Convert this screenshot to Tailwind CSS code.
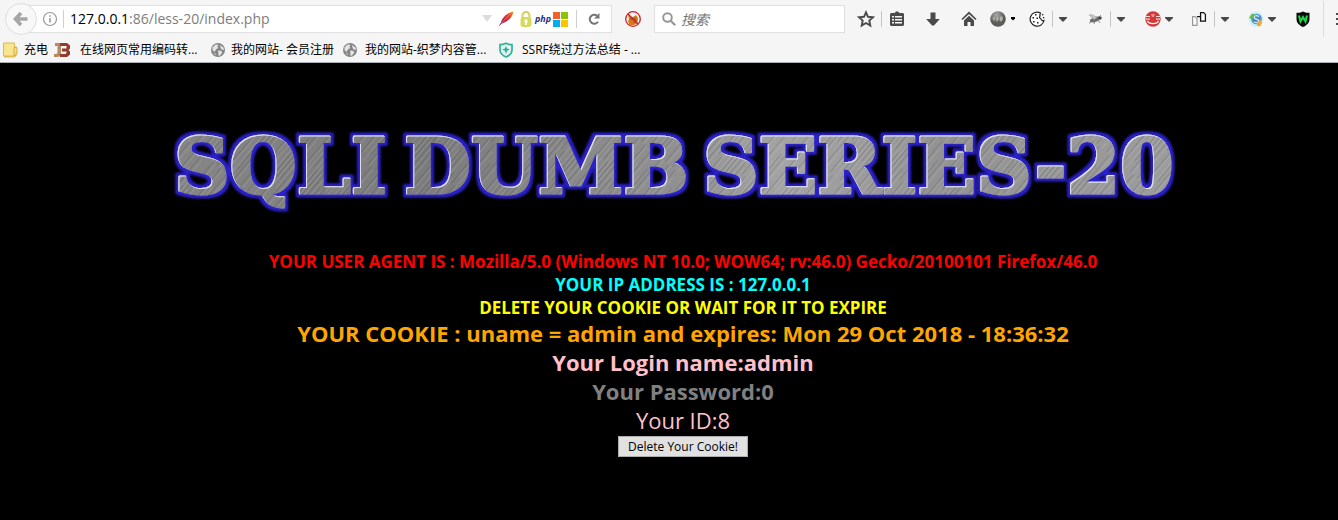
<!DOCTYPE html>
<html lang="zh-CN">
<head>
<meta charset="utf-8">
<title>127.0.0.1:86/less-20/index.php</title>
<script src="https://cdn.jsdelivr.net/npm/@tailwindcss/browser@4"></script>
</head>
<body class="flex min-h-screen flex-col bg-black font-['Open_Sans','Noto_Sans_CJK_SC',sans-serif]">

<svg class="hidden" aria-hidden="true">
  <symbol id="caret" viewBox="0 0 8 5"><path d="M0 0h8v1L4 5 0 1z" fill="#484848"/></symbol>
  <symbol id="globe" viewBox="0 0 14 14">
    <circle cx="7" cy="7" r="7" fill="#858585"/>
    <path d="M1.500 4.500 4.500 1.500 7.500 1.800 6.500 3.500 7.200 5 5 6.500 3.500 9 1.500 7zM9 2l3.500 2.500.5 2.500-2.500-.500-1-2zM7 7.500l3 .3 1.300 1.700-2.500 3.300-1.600-.500.300-2zM2.500 10l2 .5.500 1.800z" fill="#e4e4e4"/>
  </symbol>
</svg>

<header class="shrink-0 overflow-hidden border-b border-[#a9b0b5] bg-[#f5f5f5]">
  <nav class="flex h-[38px] items-center" aria-label="Navigation toolbar">
    <button class="z-10 ml-[5px] grid size-8 shrink-0 place-items-center rounded-full border border-[#dedede] bg-[#f8f8f8]" aria-label="Back">
      <svg class="size-4" viewBox="0 0 16 16"><path d="M8 2 2.500 8 8 14M3 8h11.500" fill="none" stroke="#a6a6a6" stroke-width="3.600"/></svg>
    </button>
    <div class="-ml-4 flex h-7 min-w-0 flex-1 items-center border border-[#e0e0e0] bg-white pl-5">
      <button class="shrink-0" aria-label="Site information">
        <svg class="size-4" viewBox="0 0 16 16"><circle cx="8" cy="8" r="6.500" fill="none" stroke="#999" stroke-width="1.200"/><path d="M8 7v4.500M8 4.200v1.600" stroke="#999" stroke-width="1.600"/></svg>
      </button>
      <span class="ml-[5px] h-[18px] w-px shrink-0 bg-[#d0d0d0]"></span>
      <a href="#" class="ml-1.5 min-w-0 flex-1 truncate text-[14px] leading-6 text-[#7d7d7d]"><span class="text-black">127.0.0.1</span>:86/less-20/index.php</a>
      <button class="shrink-0" aria-label="History"><svg class="h-2 w-2.5" viewBox="0 0 10 8"><path d="M0 0h10L5 7z" fill="#dcdcdc"/></svg></button>
      <svg class="ml-1.5 size-4 shrink-0" viewBox="0 0 16 16" role="img" aria-label="Apache">
        <defs><linearGradient id="feather" x1="0" y1="1" x2="1" y2="0"><stop offset="0" stop-color="#5b2b88"/><stop offset=".4" stop-color="#c7223e"/><stop offset=".7" stop-color="#e0422f"/><stop offset="1" stop-color="#f5a01e"/></linearGradient></defs>
        <path d="M.500 15.500 3 11.500C4 7 9 1.500 15.500.500 15 5 11 9.500 7.500 11L4 12.500z" fill="url(#feather)"/><path d="M3 12.500 12 3" stroke="#ef9a9a" stroke-width=".6"/>
      </svg>
      <svg class="ml-1 size-4 shrink-0" viewBox="0 0 16 16" role="img" aria-label="Lock">
        <path d="M4.500 7V4.500a3.500 3.500 0 0 1 7 0V7" fill="none" stroke="#cfd258" stroke-width="2"/><rect x="2.500" y="6" width="11" height="10" rx="3" fill="#d6da5c"/><path d="M8 8v6M6 10.500h4" stroke="#fff" stroke-width="1.700"/>
      </svg>
      <span class="w-[18px] shrink-0 text-center text-[9px] leading-4 font-bold text-[#1f3285] italic">php</span>
      <svg class="ml-px size-[15px] shrink-0" viewBox="0 0 15 15" role="img" aria-label="Windows"><path d="M0 0h7v7H0z" fill="#f4622c"/><path d="M8 0h7v7H8z" fill="#8bc400"/><path d="M0 8h7v7H0z" fill="#00aef0"/><path d="M8 8h7v7H8z" fill="#fdc500"/></svg>
      <span class="ml-2 h-[18px] w-px shrink-0 bg-[#cfcfcf]"></span>
      <button class="mx-[11px] shrink-0" aria-label="Reload">
        <svg class="size-3" viewBox="0 0 12 12"><path d="M9 2.600A4.500 4.500 0 1 0 10 8.800" fill="none" stroke="#747474" stroke-width="2"/><path d="M11.500 0v5.500H6z" fill="#747474"/></svg>
      </button>
    </div>
    <button class="ml-[13px] shrink-0" aria-label="Proxy disabled">
      <svg class="size-4" viewBox="0 0 16 16"><path d="m3 4 1.700 1.500L8 6l3-2 2 3-.500 5L9 14H5L3 11l1-3z" fill="#d9791d"/><path d="m5 8 2 1 3-2 1 3-3 2" fill="none" stroke="#8c5323"/><circle cx="8" cy="8" r="7.300" fill="none" stroke="#ce2021" stroke-width="1.300"/><path d="m3 3 10 10" stroke="#ce2021" stroke-width="1.500"/></svg>
    </button>
    <label class="ml-[13px] flex h-7 w-[191px] shrink-0 items-center border border-[#e0e0e0] bg-white pl-[7px]">
      <svg class="size-3.5 shrink-0" viewBox="0 0 14 14"><circle cx="5.500" cy="5.500" r="4.300" fill="none" stroke="#989898" stroke-width="2"/><path d="m8.500 8.500 4.700 4.700" stroke="#989898" stroke-width="2.200"/></svg>
      <input type="search" aria-label="搜索" placeholder="搜索" class="ml-[5px] w-full min-w-0 bg-transparent text-[14px] text-black italic outline-none placeholder:text-[#757575]">
    </label>

    <div class="flex shrink-0 items-center pl-3">
      <button aria-label="Bookmark this page"><svg class="size-[18px]" viewBox="0 0 18 18"><path d="m9 2.300 2 4.500 4.900.500-3.600 3.300 1 4.900L9 13l-4.300 2.500 1-4.900-3.600-3.300L7 6.800z" fill="none" stroke="#4a4a4a" stroke-width="1.900"/></svg></button>
      <span class="ml-1.5 h-4 w-px bg-[#c6c6c6]"></span>
      <button class="ml-[7px]" aria-label="Bookmarks"><svg class="size-4" viewBox="0 0 16 16"><path d="M5.500 2 7 .5h2L10.500 2H14l1 1v11l-1 1H2l-1-1V3l1-1z" fill="#4a4a4a"/><path d="M3 5.800h2M6 5.800h7M3 8.800h2M6 8.800h7M3 11.800h2M6 11.800h7" stroke="#f5f5f5" stroke-width="1.600"/></svg></button>
      <button class="ml-5" aria-label="Downloads"><svg class="size-4" viewBox="0 0 16 16"><path d="M5.500 1.500h5V8h4.300L9 14.500H7L1.200 8h4.300z" fill="#4a4a4a"/></svg></button>
      <button class="ml-5" aria-label="Home"><svg class="size-4" viewBox="0 0 16 16"><path d="m1 8.500 7-6.700 7 6.700" fill="none" stroke="#4a4a4a" stroke-width="1.700"/><path d="M3 9.500 8 4.800l5 4.700V15H9.500v-4h-3v4H3z" fill="#4a4a4a"/></svg></button>
      <button class="ml-[13px]" aria-label="User agent"><svg class="size-4" viewBox="0 0 16 16"><defs><radialGradient id="ball" cx=".4" cy=".25"><stop stop-color="#aaa"/><stop offset="1" stop-color="#5b5b58"/></radialGradient></defs><circle cx="8" cy="8" r="7.800" fill="url(#ball)"/><path d="m2.500 7 2-1 .5 2-1 2zM6 8l2-3 .5 3L7 11zM10 6l2-1 1 3-2 3-1.500-2z" fill="#b2b2a9"/></svg></button>
      <button class="ml-1" aria-label="User agent menu"><svg class="h-1 w-1.5" viewBox="0 0 6 4"><path d="M1 0h4v1.500L3 3.500 1 1.500z"/></svg></button>
      <button class="ml-[13px]" aria-label="Cookies"><svg class="size-4" viewBox="0 0 16 16"><path d="M11.500 2A7 7 0 1 0 15 9.500c-1.500.500-2.800-.200-3-1.500-1.500-.500-1.800-2-1-3 -.300-1.200 0-2 .500-3z" fill="#fff" stroke="#222" stroke-width="1.200"/><path d="M6 3h1.500v1.500H6zM3.500 6H5v1.500H3.500zM7.500 6.500H9V8H7.500zM4 10h1.500v1.500H4zM8 11h1.500v1.500H8z" fill="#222"/><path d="M13 3h1.300v1.300H13zM14 6h1.300v1.300H14z" fill="#222"/></svg></button>
      <span class="ml-[7px] h-4 w-px bg-[#c6c6c6]"></span>
      <button class="ml-1.5" aria-label="Cookies menu"><svg class="h-[5px] w-2"><use href="#caret"/></svg></button>
      <button class="ml-5" aria-label="Firebug"><svg class="size-4" viewBox="0 0 16 16"><ellipse cx="8" cy="8.500" rx="5.500" ry="2.500" transform="rotate(-22 8 8.500)" fill="#6d6d6d"/><circle cx="13" cy="7" r="1.700" fill="#444"/><path d="M10 6.500 5 3.500l-3 .5 5 4.500z" fill="#c4c4c4" stroke="#999" stroke-width=".5"/><path d="m5 10-3 2.500M8 10l-1 3M11 9l2 3M12 6l2-2" stroke="#777" stroke-width=".8"/></svg></button>
      <span class="ml-[7px] h-4 w-px bg-[#c6c6c6]"></span>
      <button class="ml-1.5" aria-label="Firebug menu"><svg class="h-[5px] w-2"><use href="#caret"/></svg></button>
      <button class="ml-5" aria-label="Red tool"><svg class="size-4" viewBox="0 0 16 16"><circle cx="8" cy="8" r="7.700" fill="#d43838"/><path d="M1 5.500h4M11 5.500h4M1 8.200h4M11 8.200h4" stroke="#f3d6d6" stroke-width="1.200"/><path d="M2.500 10c1.500 3.500 9.500 3.500 11 0" fill="none" stroke="#fff" stroke-width="1.400"/><path d="M6 3h4l-1 3H7z" fill="#ee8d8d"/></svg></button>
      <button class="ml-1" aria-label="Red tool menu"><svg class="h-[5px] w-2"><use href="#caret"/></svg></button>
      <button class="ml-[18px]" aria-label="Switch pages"><svg class="size-4" viewBox="0 0 16 16"><path d="M1.600 5.600h2.400l2 2v6.800H1.600z" fill="#fafafa" stroke="#999" stroke-width="1.200"/><path d="M9.600 1.600h3l1.800 1.800v6.800H9.600zM6 5.600h3.500" fill="#fff" stroke="#111" stroke-width="1.300"/></svg></button>
      <span class="ml-[7px] h-4 w-px bg-[#c6c6c6]"></span>
      <button class="ml-1.5" aria-label="Pages menu"><svg class="h-[5px] w-2"><use href="#caret"/></svg></button>
      <button class="ml-[19px]" aria-label="Session"><svg class="size-4" viewBox="0 0 16 16"><circle cx="8" cy="8" r="7.500" fill="#c7f1fa"/><circle cx="8.500" cy="8" r="5.300" fill="#4d8fc5"/><path d="M11 5.500C8 3.500 5.500 5 6.500 7s4 .800 4 3-3 2-4.500 1" fill="none" stroke="#d9edf5" stroke-width="1.200"/><path d="m1 7 3-4.500L7 4 4 8z" fill="#6abb35"/><path d="m9 12 4-4 1 4-2 3.500-3-.500z" fill="#efa83e"/></svg></button>
      <button class="ml-1" aria-label="Session menu"><svg class="h-[5px] w-2"><use href="#caret"/></svg></button>
      <button class="ml-[19px]" aria-label="Wappalyzer"><svg class="size-4" viewBox="0 0 16 16"><path d="M8 .500c2 1.200 4.500 1.500 6.500 1.200V8c0 4-3 6.500-6.500 8-3.500-1.500-6.500-4-6.500-8V1.700C3.500 2 6 1.700 8 .500z" fill="#0a0a0a"/><path d="m4 4.500 1.500 6L8 6.200l2.500 4.300 1.500-6" fill="none" stroke="#20d546" stroke-width="2.100"/></svg></button>
      <span class="ml-3 h-9 w-px bg-[#dcdcdc]"></span>
      <button class="ml-3 flex w-0.5 flex-col gap-[3px]" aria-label="Open menu"><span class="h-0.5 w-full bg-[#4a4a4a]"></span><span class="h-0.5 w-full bg-[#4a4a4a]"></span><span class="h-0.5 w-full bg-[#4a4a4a]"></span></button>
    </div>
  </nav>

  <nav class="flex h-6 items-center pl-[3px] text-[12px] leading-6 whitespace-nowrap text-black" aria-label="Bookmarks">
    <a href="#" class="flex w-[51px] shrink-0 items-center gap-[5px]">
      <svg class="size-4 shrink-0" viewBox="0 0 16 16"><path d="M1 1.500h9l2 3h1.500v9.500l-2 1.500H1z" fill="#e3c053"/><path d="M.500 1h11v13H.500z" fill="#f8e68f" stroke="#d8b957"/><path d="M11 5.500h3V12l-3 1.500z" fill="#f5de7a" stroke="#d1ae47"/></svg>充电
    </a>
    <a href="#" class="flex w-[157px] shrink-0 items-center gap-[10px]">
      <svg class="size-4 shrink-0" viewBox="0 0 16 16"><path d="M1 1h6v10q0 4-4 4H0v-3h2q1.500 0 1.500-2V4H1z" fill="#b68a60"/><path d="M6 1h7l3 2.500v3L14.500 8l1.500 1.500v3L13 15H6v-3h5.500l1-1V9.500H8v-3h4.500V4H6z" fill="#943a2e"/></svg>在线网页常用编码转...
    </a>
    <a href="#" class="flex w-[132px] shrink-0 items-center gap-1.5"><svg class="size-3.5 shrink-0"><use href="#globe"/></svg>我的网站- 会员注册</a>
    <a href="#" class="flex w-[155px] shrink-0 items-center gap-2"><svg class="size-3.5 shrink-0"><use href="#globe"/></svg>我的网站-织梦内容管...</a>
    <a href="#" class="flex shrink-0 items-center gap-2"><svg class="size-4 shrink-0" viewBox="0 0 16 16"><path d="M8 1.200c2 1 4 1.500 6 1.500V8c0 3.500-2.500 5.500-6 7-3.500-1.500-6-3.500-6-7V2.700c2 0 4-.500 6-1.500z" fill="#e5f5f1" stroke="#35b197" stroke-width="1.700"/><path d="m8 4 1.200 2.500L12 7.500 9.200 8.700 8 12 6.800 8.700 4 7.500l2.800-1z" fill="#35b197"/></svg>SSRF绕过方法总结 - ...</a>
  </nav>
</header>

<main class="flex flex-1 flex-col items-center pt-[57px] pl-7 text-center">
  <h1 class="w-full max-w-[1040px]">
    <svg class="block w-full" viewBox="0 0 1040 100">
      <defs>
        <linearGradient id="steel" x1="0" x2="1"><stop offset="0" stop-color="#868686"/><stop offset=".25" stop-color="#7c7c7c"/><stop offset=".5" stop-color="#919191"/><stop offset=".6" stop-color="#a4a4a4"/><stop offset=".75" stop-color="#929292"/><stop offset="1" stop-color="#9e9e9e"/></linearGradient>
        <pattern id="scratches" width="97" height="31" patternUnits="userSpaceOnUse" patternTransform="rotate(-50)">
          <path d="M0 1.500h60M20 6.500h77M0 11.500h45M50 15.500h47M8 19.500h70M0 24.500h90M30 28.500h40" stroke="#fff" stroke-opacity=".12"/>
          <path d="M30 3.500h67M0 8.500h50M40 13.500h57M0 17.500h40M60 21.500h37M10 26.500h50M0 30.500h80" stroke="#000" stroke-opacity=".12"/>
        </pattern>
        <pattern id="brushed" width="1040" height="100" patternUnits="userSpaceOnUse"><rect width="1040" height="100" fill="url(#steel)"/><rect width="1040" height="100" fill="url(#scratches)"/></pattern>
        <filter id="glow" filterUnits="userSpaceOnUse" x="0" y="0" width="1040" height="100">
          <feMorphology in="SourceAlpha" operator="dilate" radius="3" result="wide"/>
          <feGaussianBlur in="wide" stdDeviation="1.200" result="soft"/>
          <feFlood flood-color="#2a20c8"/><feComposite in2="soft" operator="in" result="halo"/>
          <feOffset in="SourceAlpha" dx="1" dy="1" result="shifted"/>
          <feFlood flood-color="#eeeeff" flood-opacity=".85"/><feComposite in2="SourceAlpha" operator="in"/><feComposite in2="shifted" operator="out" result="edge"/>
          <feMerge><feMergeNode in="halo"/><feMergeNode in="SourceGraphic"/><feMergeNode in="edge"/></feMerge>
        </filter>
      </defs>
      <text y="73" font-size="77" font-weight="700" fill="url(#brushed)" stroke="url(#brushed)" stroke-width="3" stroke-linejoin="round" filter="url(#glow)" class="font-['DejaVu_Serif',serif]"><tspan x="11">SQLI</tspan> <tspan x="241">DUMB</tspan> <tspan x="540">SERIES-20</tspan></text>
    </svg>
  </h1>
  <div class="mt-[30px] text-[17px] leading-[23px] font-bold">
    <p class="text-[#ff0000]">YOUR USER AGENT IS : Mozilla/5.0 (Windows NT 10.0; WOW64; rv:46.0) Gecko/20100101 Firefox/46.0</p>
    <p class="text-[#00ffff]">YOUR IP ADDRESS IS : 127.0.0.1</p>
    <p class="text-[#ffff00]">DELETE YOUR COOKIE OR WAIT FOR IT TO EXPIRE</p>
  </div>
  <div class="text-[22px] leading-[29px] font-bold">
    <p class="text-[#ffa500]">YOUR COOKIE : uname = admin and expires: Mon 29 Oct 2018 - 18:36:32</p>
    <p class="text-[#ffc0cb]">Your Login name:admin</p>
    <p class="text-[#808080]">Your Password:0</p>
    <p class="font-normal text-[#ffc0cb]">Your ID:8</p>
  </div>
  <button class="mt-px h-[21px] border border-[#adadad] bg-[#e1e1e1] px-[9px] text-[12px] leading-[18px] text-black">Delete Your Cookie!</button>
</main>
</body>
</html>
